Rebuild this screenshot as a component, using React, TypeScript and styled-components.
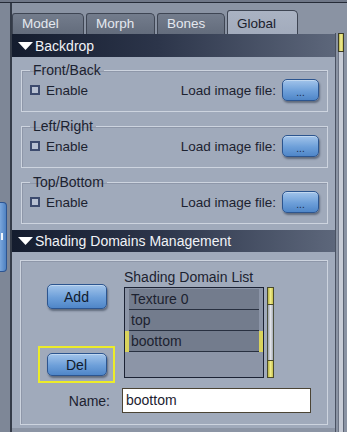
import React from 'react'
import styled, { createGlobalStyle } from 'styled-components'

const GlobalStyle = createGlobalStyle`
  html, body {
    margin: 0;
    padding: 0;
    background: #8a93a3;
  }
  body {
    font-family: "Liberation Sans", Arial, sans-serif;
    color: #1c2230;
  }
`

const Frame = styled.div`
  width: 347px;
  height: 432px;
  display: flex;
  flex-direction: column;
  overflow: hidden;
  background: #8a93a3;
`

const TopStrip = styled.div`
  height: 3px;
  flex: none;
  background: linear-gradient(#6f7787 0 2px, #252b37 2px);
`

const Body = styled.div`
  flex: 1;
  display: flex;
`

const LeftRail = styled.div`
  width: 10px;
  flex: none;
  background: #7e8797;
  border-right: 2px solid #343b48;
`

const SideTab = styled.div`
  margin-top: 199px;
  width: 7px;
  height: 70px;
  border-radius: 0 4px 4px 0;
  background: linear-gradient(90deg, #7aa6dc, #4f82c2);
  border: 1px solid #2d5592;
  border-left: none;
  box-sizing: border-box;
  display: flex;
  padding-top: 30px;
  padding-left: 1px;
`

const SideTick = styled.div`
  width: 2px;
  height: 7px;
  background: #f2f6fb;
`

const Main = styled.div`
  width: 323px;
  flex: none;
  display: flex;
  flex-direction: column;
`

const TabBar = styled.div`
  height: 31px;
  flex: none;
  display: flex;
  align-items: flex-end;
  gap: 2px;
`

const Tab = styled.div<{ $active?: boolean; $w: number }>`
  width: ${p => p.$w}px;
  height: ${p => (p.$active ? 24 : 21)}px;
  box-sizing: border-box;
  border: 1px solid #3e4553;
  border-bottom: none;
  border-radius: 3px 5px 0 0;
  background: ${p =>
    p.$active
      ? 'linear-gradient(#aab3c3, #a2abbc)'
      : 'linear-gradient(#737c8c, #636c7c)'};
  color: ${p => (p.$active ? '#1a202c' : '#e4e8ef')};
  font-size: 13.5px;
  display: flex;
  align-items: flex-end;
  padding: 0 0 3px 9px;
`

const Header = styled.div<{ $h: number }>`
  height: ${p => p.$h}px;
  flex: none;
  display: flex;
  align-items: center;
  gap: 2px;
  padding-left: 6px;
  background: linear-gradient(90deg, #141c2e 0%, #2c354a 45%, #5d677b 100%);
  color: #f1f3f7;
  font-size: 14px;
`

const Section = styled.div<{ $pad: string }>`
  background: #a0aabb;
  padding: ${p => p.$pad};
  display: flex;
  flex-direction: column;
  gap: 7px;
`

const Group = styled.fieldset`
  margin: 0;
  height: 49px;
  box-sizing: border-box;
  border: 1px solid #cdd4df;
  box-shadow: inset 1px 1px 0 #8e97a9;
  padding: 2px 8px 0 8px;
  display: flex;
  align-items: center;
`

const Legend = styled.legend`
  padding: 0 3px;
  font-size: 14px;
  line-height: 14px;
  color: #1c2230;
`

const CheckBox = styled.span`
  width: 10px;
  height: 10px;
  box-sizing: border-box;
  border: 2px solid #3d4b6e;
  background: #b8c1d2;
  margin-right: 6px;
`

const Text = styled.span`
  font-size: 13.5px;
  color: #1c2230;
`

const Spacer = styled.span`
  flex: 1;
`

const BlueButton = styled.div<{ $w: number; $h: number }>`
  width: ${p => p.$w}px;
  height: ${p => p.$h}px;
  box-sizing: border-box;
  border: 1px solid #2c558f;
  border-radius: 5px;
  background: linear-gradient(#a2c4ea, #6d9fd9 55%, #4f86c8);
  box-shadow: 1px 2px 2px rgba(20, 30, 50, 0.45), inset 0 1px 0 rgba(255, 255, 255, 0.35);
  display: flex;
  align-items: center;
  justify-content: center;
  font-size: 14px;
  color: #101a2c;
`

const Dots = styled.span`
  font-size: 10px;
  margin-top: 4px;
  color: #1c2a44;
`

const BrowseButton = styled(BlueButton)`
  margin-left: 6px;
`

const Box = styled.div`
  border: 1px solid #cdd4df;
  box-shadow: inset 1px 1px 0 #8e97a9;
  padding: 9px 0 11px 17px;
  display: flex;
  flex-direction: column;
`

const TopRow = styled.div`
  display: flex;
`

const ButtonCol = styled.div`
  width: 77px;
  display: flex;
  flex-direction: column;
  align-items: center;
`

const AddButton = styled(BlueButton)`
  margin-top: 14px;
`

const Highlight = styled.div`
  margin-top: 37px;
  width: 77px;
  height: 37px;
  box-sizing: border-box;
  border: 2px solid #ecec2a;
  display: flex;
  align-items: center;
  justify-content: center;
`

const ListCol = styled.div`
  margin-left: 9px;
  display: flex;
  flex-direction: column;
`

const ListLabel = styled.div`
  height: 15px;
  line-height: 15px;
  margin-bottom: 2px;
  font-size: 14px;
  color: #1c2230;
`

const ListRow = styled.div`
  display: flex;
  gap: 3px;
`

const List = styled.div`
  width: 140px;
  height: 91px;
  box-sizing: border-box;
  border: 1px solid #1b2234;
  background: #8c95a7;
  padding: 1px 4px 0 4px;
`

const Item = styled.div<{ $selected?: boolean }>`
  height: 20px;
  border-bottom: 1px solid #283040;
  background: #737c8d;
  font-size: 14px;
  line-height: 20px;
  padding-left: 2px;
  color: #1c2230;
  box-shadow: ${p => (p.$selected ? '-4px 0 0 #d9d35c, 4px 0 0 #d9d35c' : 'none')};
`

const MiniScroll = styled.div`
  width: 7px;
  height: 91px;
  box-sizing: border-box;
  border: 1px solid #4a4f3c;
  background: linear-gradient(90deg, #9aa0aa, #e2e4e8 50%, #a8aeb8);
  display: flex;
  flex-direction: column;
  justify-content: space-between;
`

const Thumb = styled.div<{ $h: number }>`
  height: ${p => p.$h}px;
  background: linear-gradient(90deg, #b8b44a, #f0ec8a 50%, #c8c250);
  border: 1px solid #4a4a2a;
  margin: -1px;
`

const NameRow = styled.div`
  margin-top: 5px;
  display: flex;
  align-items: center;
`

const NameLabel = styled.span`
  width: 72px;
  text-align: right;
  margin-right: 12px;
  font-size: 14px;
  color: #1c2230;
`

const NameInput = styled.div`
  width: 189px;
  height: 25px;
  box-sizing: border-box;
  border: 1px solid #4b4434;
  background: #ffffff;
  font-size: 14px;
  line-height: 23px;
  padding-left: 3px;
  color: #1c2230;
`

const BottomStrip = styled.div`
  flex: 1;
  background: #8c95a5;
`

const RightRail = styled.div`
  width: 11px;
  flex: none;
  display: flex;
  flex-direction: column;
  padding-top: 30px;
`

const RailBody = styled.div`
  flex: 1;
  border-left: 1px solid #4a5262;
  padding-left: 2px;
  display: flex;
`

const RailTrack = styled.div`
  width: 6px;
  box-sizing: border-box;
  border-left: 1px solid #6c7484;
  border-right: 1px solid #5c6474;
  background: #c7ccd6;
`

const RailThumb = styled.div`
  height: 17px;
  margin: 0 -1px;
  border: 1px solid #3c3c28;
  background: linear-gradient(90deg, #b8b44a, #f4f09a 50%, #c8c250);
`

const Arrow = () => (
  <svg width="15" height="8" viewBox="0 0 15 8">
    <polygon points="0,0 15,0 7.5,8" fill="#ffffff" />
  </svg>
)

const ImageGroup = ({ title }: { title: string }) => (
  <Group>
    <Legend>{title}</Legend>
    <CheckBox />
    <Text>Enable</Text>
    <Spacer />
    <Text>Load image file:</Text>
    <BrowseButton $w={37} $h={22}>
      <Dots>...</Dots>
    </BrowseButton>
  </Group>
)

export default function App() {
  return (
    <>
      <GlobalStyle />
      <Frame>
        <TopStrip />
        <Body>
          <LeftRail>
            <SideTab>
              <SideTick />
            </SideTab>
          </LeftRail>
          <Main>
            <TabBar>
              <Tab $w={72}>Model</Tab>
              <Tab $w={69}>Morph</Tab>
              <Tab $w={68}>Bones</Tab>
              <Tab $w={71} $active>Global</Tab>
            </TabBar>
            <Header $h={23}>
              <Arrow />
              Backdrop
            </Header>
            <Section $pad="6px 7px 6px 9px">
              <ImageGroup title="Front/Back" />
              <ImageGroup title="Left/Right" />
              <ImageGroup title="Top/Bottom" />
            </Section>
            <Header $h={22}>
              <Arrow />
              Shading Domains Management
            </Header>
            <Section $pad="8px 7px 3px 8px">
              <Box>
                <TopRow>
                  <ButtonCol>
                    <AddButton $w={60} $h={25}>Add</AddButton>
                    <Highlight>
                      <BlueButton $w={60} $h={23}>Del</BlueButton>
                    </Highlight>
                  </ButtonCol>
                  <ListCol>
                    <ListLabel>Shading Domain List</ListLabel>
                    <ListRow>
                      <List>
                        <Item>Texture 0</Item>
                        <Item>top</Item>
                        <Item $selected>boottom</Item>
                      </List>
                      <MiniScroll>
                        <Thumb $h={16} />
                        <Thumb $h={16} />
                      </MiniScroll>
                    </ListRow>
                  </ListCol>
                </TopRow>
                <NameRow>
                  <NameLabel>Name:</NameLabel>
                  <NameInput>boottom</NameInput>
                </NameRow>
              </Box>
            </Section>
            <BottomStrip />
          </Main>
          <RightRail>
            <RailBody>
              <RailTrack>
                <RailThumb />
              </RailTrack>
            </RailBody>
          </RightRail>
        </Body>
      </Frame>
    </>
  )
}
